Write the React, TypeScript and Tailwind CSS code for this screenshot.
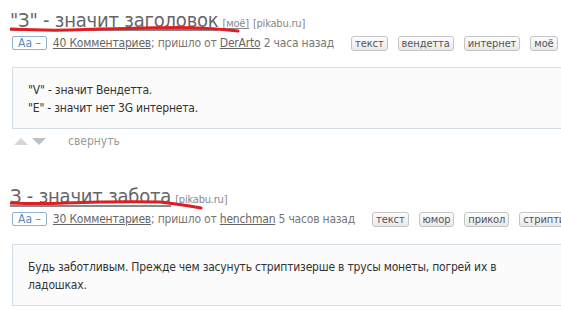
import React from 'react';

interface PostProps {
  title: string;
  sources: { label: string; underline?: boolean }[];
  comments: string;
  author: string;
  when: string;
  tags: string[];
  lines: string[];
  mark: string;
  boxGap: string;
  showCollapse?: boolean;
}

function Tag({ label }: { label: string }) {
  return (
    <span className="inline-flex items-center h-[15px] px-[3px] text-[11px] tracking-[-0.1px] leading-none text-[#555] border border-[#c4c4c4] rounded-[3px] bg-gradient-to-b from-[#fdfdfd] to-[#e9e9e9] whitespace-nowrap">
      {label}
    </span>
  );
}

function Post({ title, sources, comments, author, when, tags, lines, mark, boxGap, showCollapse }: PostProps) {
  return (
    <div className="pl-[10px]">
      <div className="relative h-[35px] pt-[9px] leading-[22px] whitespace-nowrap">
        <a className="text-[20px] tracking-[-0.2px] text-[#666] underline decoration-[#888] underline-offset-[2px]">{title}</a>
        {sources.map((s) => (
          <span
            key={s.label}
            className={`ml-[4px] text-[11px] tracking-[-0.2px] text-[#888] ${s.underline ? 'underline' : ''}`}
          >
            {s.label}
          </span>
        ))}
        <svg className="absolute left-0 top-0 pointer-events-none" width="300" height="40">
          <path d={mark} fill="none" stroke="#e01d24" strokeWidth="3" strokeLinecap="round" strokeLinejoin="round" />
        </svg>
      </div>
      <div className="flex items-center h-[16px] pl-[2px] text-[12px] tracking-[-0.2px] text-[#777] whitespace-nowrap">
        <span className="inline-flex items-center h-[14px] px-[5px] border border-[#8eb2d2] rounded-[2px] text-[12px] leading-none text-[#5a8dbb] tracking-normal">
          Аа –
        </span>
        <a className="ml-[6px] text-[#666] underline">{comments}</a>
        <span>; пришло от&nbsp;</span>
        <a className="text-[#666] underline">{author}</a>
        <span>&nbsp;{when}</span>
        <div className="flex gap-[10px] ml-[17px] tracking-normal">
          {tags.map((t) => (
            <Tag key={t} label={t} />
          ))}
        </div>
      </div>
      <div className={`ml-[2px] ${boxGap} w-[620px] border border-[#d3dee7] bg-[#fbfbfb] pl-[15px] pt-[13px] pb-[11px] text-[12px] tracking-[-0.2px] leading-[18px] text-[#333]`}>
        {lines.map((l) => (
          <div key={l}>{l}</div>
        ))}
      </div>
      {showCollapse && (
        <div className="flex items-center h-[24px] pl-[4px]">
          <svg width="14" height="7" viewBox="0 0 14 7">
            <polygon points="0,7 7,0 14,7" fill="#d6d6d6" />
          </svg>
          <svg className="ml-[4px]" width="14" height="7" viewBox="0 0 14 7">
            <polygon points="0,0 14,0 7,7" fill="#bcc0cb" />
          </svg>
          <span className="ml-[22px] text-[12px] text-[#9a9a9a]">свернуть</span>
        </div>
      )}
    </div>
  );
}

export default function App() {
  return (
    <div className="w-[561px] h-[310px] overflow-hidden bg-white font-[family-name:'DejaVu_Sans_Condensed','Liberation_Sans',sans-serif]">
      <Post
        title={'"З" - значит заголовок'}
        sources={[{ label: '[моё]', underline: true }, { label: '[pikabu.ru]' }]}
        comments="40 Комментариев"
        author="DerArto"
        when="2 часа назад"
        tags={['текст', 'вендетта', 'интернет', 'моё']}
        lines={['"V" - значит Вендетта.', '"E" - значит нет 3G интернета.']}
        mark="M1 29 Q30 30.5 60 30 Q120 28 170 27.5 Q205 28 228 31"
        boxGap="mt-[16px]"
        showCollapse
      />
      <div className="h-[23px]" />
      <Post
        title="З - значит забота"
        sources={[{ label: '[pikabu.ru]' }]}
        comments="30 Комментариев"
        author="henchman"
        when="5 часов назад"
        tags={['текст', 'юмор', 'прикол', 'стриптиз']}
        lines={['Будь заботливым. Прежде чем засунуть стриптизерше в трусы монеты, погрей их в', 'ладошках.']}
        mark="M0 27 Q30 28 55 27 Q110 25 150 26 Q175 29 191 32"
        boxGap="mt-[17px]"
      />
    </div>
  );
}
